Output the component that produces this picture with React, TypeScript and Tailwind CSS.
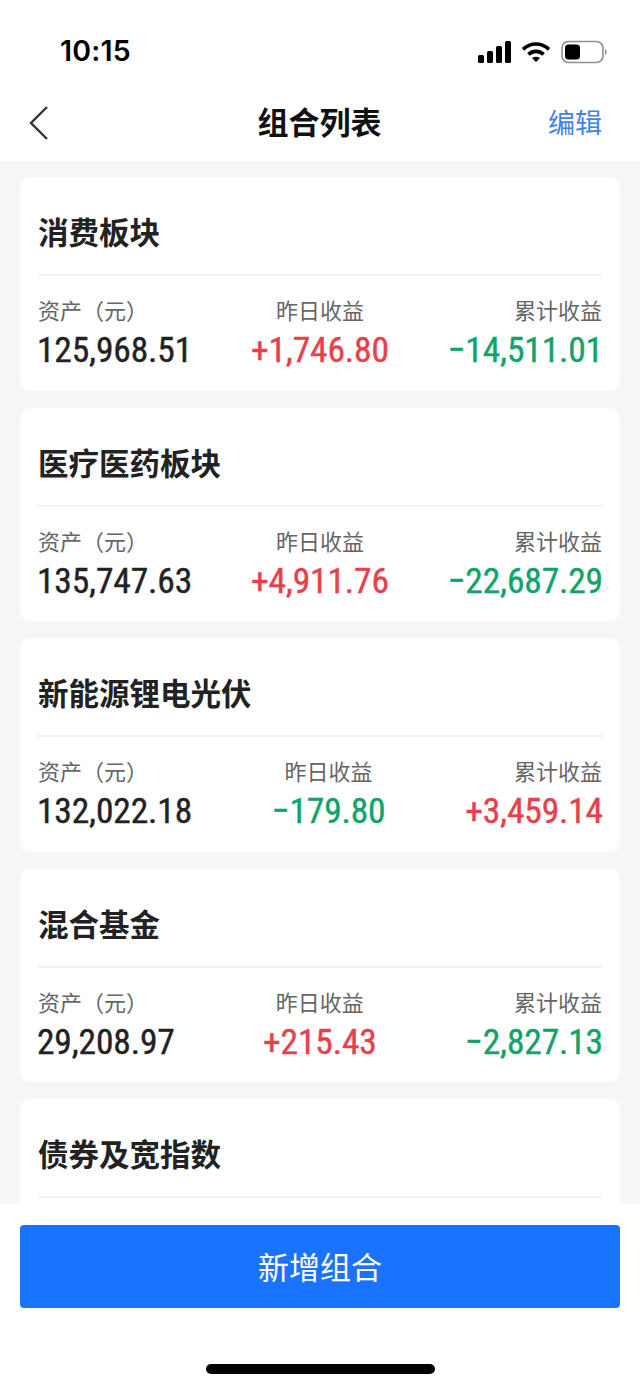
const cjk = "font-['Noto_Sans_CJK_SC','Noto_Sans',sans-serif]";
const RED = 'text-[#e8404a]';
const GREEN = 'text-[#12a26a]';

const groups = [
  { name: '消费板块', asset: '125,968.51', day: '+1,746.80', dayC: RED, total: '−14,511.01', totalC: GREEN },
  { name: '医疗医药板块', asset: '135,747.63', day: '+4,911.76', dayC: RED, total: '−22,687.29', totalC: GREEN },
  { name: '新能源锂电光伏', asset: '132,022.18', day: '−179.80', dayC: GREEN, total: '+3,459.14', totalC: RED },
  { name: '混合基金', asset: '29,208.97', day: '+215.43', dayC: RED, total: '−2,827.13', totalC: GREEN },
];

function Col({ label, value, color, align, nudge }: { label: string; value: string; color: string; align: string; nudge: string }) {
  return (
    <div className={`flex flex-col ${align}`}>
      <div className="h-[38px] text-[22px] leading-[36px] text-[#666666]">{label}</div>
      <div className={`h-[42px] font-['Roboto',sans-serif] text-[35.5px] leading-[42px] font-normal font-stretch-condensed tracking-[-0.15px] [-webkit-text-stroke:0.4px_currentColor] ${nudge} ${color}`}>{value}</div>
    </div>
  );
}

function Title({ children }: { children: string }) {
  return (
    <div className="flex h-[99px] items-center border-b-2 border-[#f2f2f2] pt-[12px] text-[30.5px] leading-none font-semibold text-[#222222]">{children}</div>
  );
}

function Card({ g }: { g: (typeof groups)[number] }) {
  return (
    <div className="h-[213.5px] shrink-0 rounded-[10px] bg-white px-[18px]">
      <Title>{g.name}</Title>
      <div className="flex justify-between pt-[15px]">
        <Col label="资产（元）" value={g.asset} color="text-[#222222]" align="items-start" nudge="-ml-[1px]" />
        <Col label="昨日收益" value={g.day} color={g.dayC} align="items-center" nudge="" />
        <Col label="累计收益" value={g.total} color={g.totalC} align="items-end" nudge="-mr-[1px]" />
      </div>
    </div>
  );
}

export default function App() {
  return (
    <div className={`flex h-[1386px] w-[640px] flex-col overflow-hidden bg-white ${cjk}`}>
      <div className="flex h-[88px] shrink-0 items-start justify-between pt-[34px] pr-[33px] pl-[60px]">
        <span className="font-['Inter',sans-serif] text-[28.5px] leading-[34px] font-semibold tracking-[0.2px] text-black">10:15</span>
        <div className="flex items-center gap-[9px] pt-[6px]">
          <svg width="34" height="22" viewBox="0 0 34 22" fill="#000">
            <rect x="0" y="14" width="6" height="8" rx="1.5" />
            <rect x="9" y="10" width="6" height="12" rx="1.5" />
            <rect x="18" y="5" width="6" height="17" rx="1.5" />
            <rect x="27" y="0" width="6" height="22" rx="1.5" />
          </svg>
          <svg width="30" height="22" viewBox="0 0 30 22" fill="none" stroke="#000" strokeWidth="3.6">
            <path d="M2 8.4C9.6 1.2 20.4 1.2 28 8.4" />
            <path d="M7.4 13.4C11.8 9.4 18.2 9.4 22.6 13.4" />
            <path d="M11 17L15 21L19 17C16.6 15.2 13.4 15.2 11 17Z" fill="#000" stroke="none" />
          </svg>
          <svg width="46" height="24" viewBox="0 0 46 24" fill="none" className="ml-[1px]">
            <rect x="1" y="1.5" width="41" height="21" rx="6.5" stroke="#8f8f8f" strokeWidth="1.6" />
            <rect x="4" y="4.5" width="15" height="15" rx="3.5" fill="#000" />
            <path d="M44 9V15C45.2 14.4 45.6 13.2 45.6 12C45.6 10.8 45.2 9.6 44 9Z" fill="#8f8f8f" />
          </svg>
        </div>
      </div>
      <div className="relative flex h-[73px] shrink-0 items-start justify-between pt-[15px] pr-[38px] pl-[28px]">
        <svg width="22" height="36" viewBox="0 0 22 36" fill="none" stroke="#333333" strokeWidth="2.4" className="mt-[2px]">
          <path d="M19 2L3 18L19 34" />
        </svg>
        <div className="absolute inset-x-0 top-[14px] pr-[1px] text-center text-[31px] leading-[38px] font-semibold text-[#111111]">组合列表</div>
        <span className="text-[27px] leading-[38px] text-[#3f83e6]">编辑</span>
      </div>
      <div className="flex min-h-0 flex-1 flex-col gap-[17px] overflow-hidden bg-[#f6f6f6] px-[20px] pt-[16px]">
        {groups.map((g) => (
          <Card key={g.name} g={g} />
        ))}
        <div className="h-[213.5px] shrink-0 rounded-[10px] bg-white px-[18px]">
          <Title>债券及宽指数</Title>
        </div>
      </div>
      <div className="flex h-[182px] shrink-0 flex-col items-center bg-white px-[20px] pt-[21px]">
        <div className="flex h-[83px] w-full items-center justify-center rounded-[4px] bg-[#1a73fe] text-[31px] font-normal text-white">新增组合</div>
        <div className="mt-[56px] h-[10px] w-[229px] rounded-full bg-black" />
      </div>
    </div>
  );
}
